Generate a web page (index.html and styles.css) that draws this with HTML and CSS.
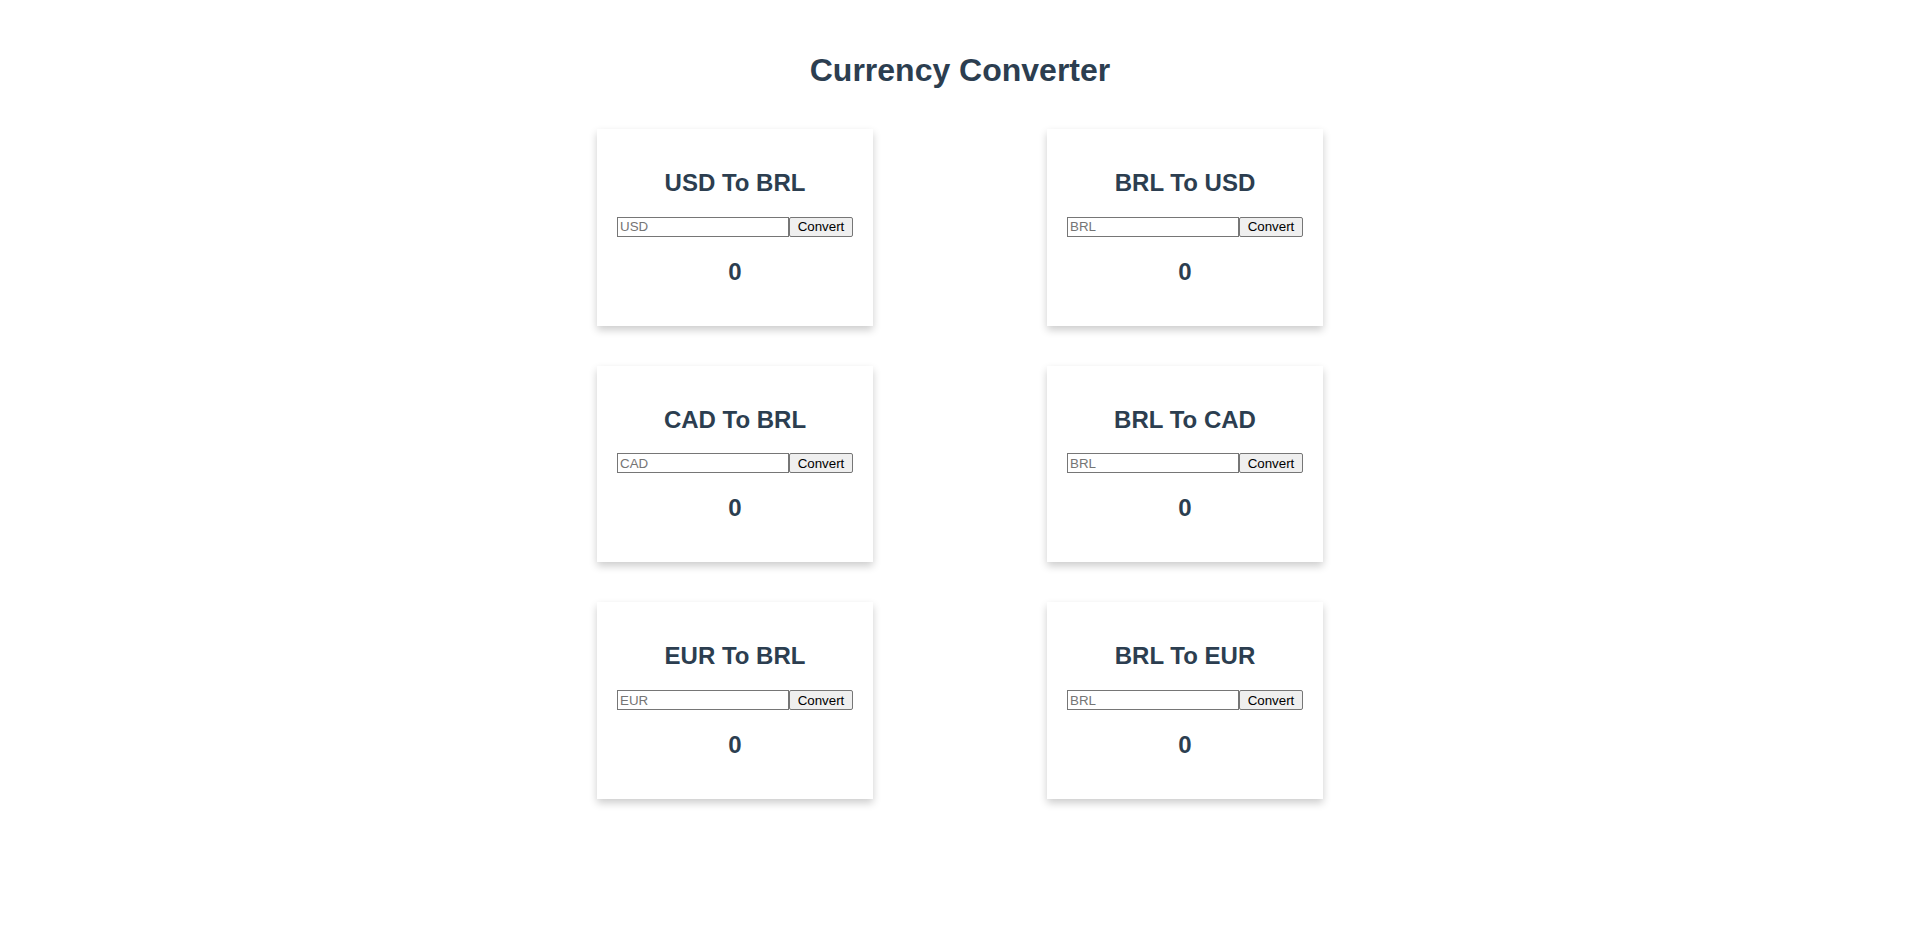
FILE: index.html
```html
<!DOCTYPE html>
<html lang="en">
<head>
<meta charset="utf-8">
<title>Currency Converter</title>
<link rel="stylesheet" href="styles.css">
</head>
<body>
<div class="app">
  <h1 class="title">Currency Converter</h1>
  <div class="grid">
    <div class="card">
      <h2 class="card-title">USD To BRL</h2>
      <div class="row"><input class="amount" type="text" placeholder="USD"><button class="convert">Convert</button></div>
      <h2 class="result">0</h2>
    </div>
    <div class="card">
      <h2 class="card-title">BRL To USD</h2>
      <div class="row"><input class="amount" type="text" placeholder="BRL"><button class="convert">Convert</button></div>
      <h2 class="result">0</h2>
    </div>
    <div class="card">
      <h2 class="card-title">CAD To BRL</h2>
      <div class="row"><input class="amount" type="text" placeholder="CAD"><button class="convert">Convert</button></div>
      <h2 class="result">0</h2>
    </div>
    <div class="card">
      <h2 class="card-title">BRL To CAD</h2>
      <div class="row"><input class="amount" type="text" placeholder="BRL"><button class="convert">Convert</button></div>
      <h2 class="result">0</h2>
    </div>
    <div class="card">
      <h2 class="card-title">EUR To BRL</h2>
      <div class="row"><input class="amount" type="text" placeholder="EUR"><button class="convert">Convert</button></div>
      <h2 class="result">0</h2>
    </div>
    <div class="card">
      <h2 class="card-title">BRL To EUR</h2>
      <div class="row"><input class="amount" type="text" placeholder="BRL"><button class="convert">Convert</button></div>
      <h2 class="result">0</h2>
    </div>
  </div>
</div>
</body>
</html>
```
FILE: styles.css
```css
html, body {
  margin: 0;
  padding: 0;
  background: #ffffff;
}

.app {
  font-family: "Liberation Sans", Arial, Helvetica, sans-serif;
  color: #2c3e50;
  text-align: center;
  padding: 52px 0 60px;
}

.title {
  font-size: 32px;
  font-weight: bold;
  line-height: normal;
  margin: 0 0 40px;
}

.grid {
  display: grid;
  grid-template-columns: 276px 276px;
  column-gap: 174px;
  row-gap: 40px;
  justify-content: center;
}

.card {
  background: #ffffff;
  padding: 20px;
  box-shadow: 0 4px 8px 0 rgba(0, 0, 0, 0.2);
}

.card-title,
.result {
  font-size: 24px;
  font-weight: bold;
  line-height: normal;
  margin: 19.92px 0;
}

.row {
  display: flex;
  justify-content: center;
  align-items: flex-start;
  height: 21px;
}

.amount {
  box-sizing: border-box;
  width: 172px;
  height: 20px;
  margin: 0;
  padding: 1px 2px;
  border: 1px solid #767676;
  border-radius: 0;
  font-family: "Liberation Sans", Arial, sans-serif;
  font-size: 13.33px;
  color: #000;
  background: #fff;
}

.amount::placeholder {
  color: #757575;
}

.convert {
  box-sizing: border-box;
  width: 64px;
  height: 20px;
  margin: 0;
  padding: 1px 6px;
  border: 1px solid #767676;
  border-radius: 2px;
  background: #efefef;
  color: #000;
  font-family: "Liberation Sans", Arial, sans-serif;
  font-size: 13.33px;
}
```
